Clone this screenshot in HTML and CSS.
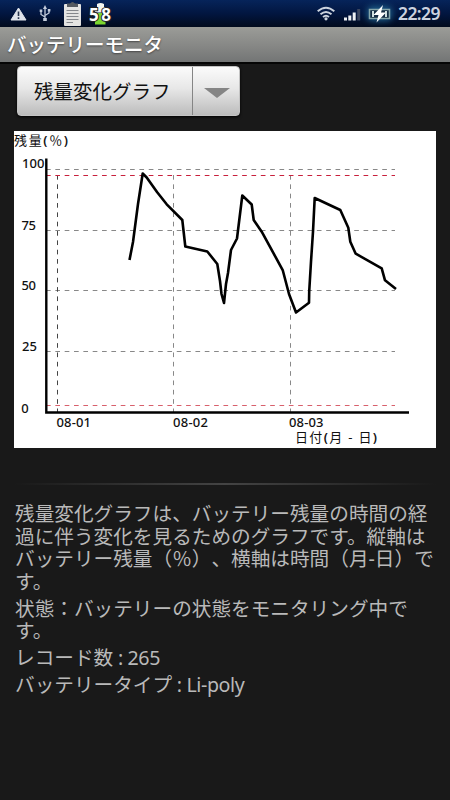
FILE: index.html
```
<!DOCTYPE html>
<html lang="ja">
<head>
	<meta charset="utf-8">
	<meta name="viewport" content="width=device-width, initial-scale=1.0">
	<title>バッテリーモニタ</title>
	<link rel="stylesheet" href="styles.css">
</head>
<body>

	<div id="status-bar">
		<svg class="status-icons" width="120" height="27" viewBox="0 0 120 27">
			<path d="M18.5 8 L26 20 H11 Z" fill="#dfe3ea" stroke="#dfe3ea" stroke-linejoin="round"/>
			<path d="M18.5 11.5 V16 M18.5 17.3 V19" stroke="#27344d" stroke-width="1.6"/>
			<g fill="none" stroke="#c3ccdb" stroke-width="1.3">
				<path d="M45 8 V20 M45 17 L41 14.5 V11 M45 15.5 L49 13 V10"/>
			</g>
			<path d="M45 5 L47 9 H43 Z M43.2 18 h3.6 v3 h-3.6 Z M39.7 9.5 h2.6 v2.6 h-2.6 Z M47.8 9 h2.6 v2.6 h-2.6 Z" fill="#c3ccdb"/>
			<rect x="64" y="4" width="17" height="22" rx="1" fill="#e4e4e2"/>
			<path d="M67 7 V3.5 H70 Q72.5 .5 75 3.5 H78 V7 Z" fill="#555a60"/>
			<path d="M66.5 10.5 H78.5 M66.5 13.5 H78.5 M66.5 16.5 H78.5 M66.5 19.5 H78.5 M66.5 22.5 H73" stroke="#85888c"/>
			<path d="M97 4 Q100.500 2 104 4 V7 H105.500 V12.500 H95 V7 H97 Z" fill="#f3f5ef"/>
			<path d="M97.500 13 h5 v5 l3 3.500 v3 h-10.500 v-3 l2.500 -3.500 Z" fill="#7bd62f"/>
			<text class="level" x="89" y="20.500" textLength="22">58</text>
		</svg>
		<svg class="status-icons" width="132" height="27" viewBox="318 0 132 27">
			<g fill="none" stroke="#ccd3dd" stroke-width="1.9">
				<path d="M317.700 11.300 Q326 4 334.300 11.300"/>
				<path d="M320.500 14.300 Q326 9.500 331.500 14.300"/>
				<path d="M323 17 Q326 14.500 329 17"/>
			</g>
			<circle cx="326" cy="18.800" r="1.600" fill="#ccd3dd"/>
			<path d="M344 17.500 h3 v3 h-3 Z M348.300 15.500 h3 v5 h-3 Z M352.700 12.500 h3 v8 h-3 Z" fill="#eceff3"/>
			<path d="M357.200 9 h3 v11.500 h-3 Z" fill="#3a4660"/>
			<rect class="charge-glow" x="367" y="6" width="25" height="15" rx="5"/>
			<rect x="369.500" y="9.500" width="20" height="9" fill="#152c43" stroke="#87a7ab" stroke-width="1.500"/>
			<path d="M373 11 v6 M386 11 v6" stroke="#cfdfdf" stroke-width="2"/>
			<path d="M383 5 L373.500 15 H378.500 L376.500 22.500 L386 12.500 H381 Z" fill="#fff"/>
			<text class="clock" x="398" y="19.500" textLength="42.500">22:29</text>
		</svg>
	</div>

	<div id="title-bar">バッテリーモニタ</div>

	<div id="content">
		<div class="spinner">
			<span class="spinner-label">残量変化グラフ</span>
			<span class="spinner-arrow"></span>
		</div>

		<svg class="chart" width="422" height="317" viewBox="14 131 422 317">
			<!-- grid -->
			<g class="grid">
				<path d="M46 169.500 H395 M46 230.500 H395 M46 290.500 H395 M46 351.500 H395"/>
				<path d="M173.500 175 V412 M290.500 175 V412"/>
				<path class="first-day" d="M57.500 175 V412"/>
				<path class="limit" d="M46 175.500 H395"/>
				<path class="limit low" d="M46 405.500 H395"/>
			</g>
			<!-- axes -->
			<path class="axis" d="M46.300 158.500 V412.500 H409"/>
			<!-- battery level -->
			<polyline class="line" points="129.500,260 133,242 138,204 142.700,173.500 146.700,177.500 157,192 166.700,204.300 182.300,220 185.300,246.500 207.300,251.500 217.300,264 220,281 221.500,294 224,303 226,284 228,273 231,250 237,238.500 242.300,195.500 251.700,204.500 253.700,220 261.700,231.700 282.700,270 289,294 296,312.500 309,302.700 309.200,291.700 311,261.700 313,231.700 314.700,198 340.300,210 348.300,227.700 350.300,241.700 355.700,253.700 381.700,268.300 385,280.300 396,289"/>
			<g class="labels">
				<text class="unit" x="14" y="145" textLength="54">残量<tspan class="paren">(</tspan>％<tspan class="paren">)</tspan></text>
				<text x="22" y="168" textLength="22.500">100</text>
				<text x="21.500" y="229.500" textLength="14.500">75</text>
				<text x="21.500" y="290" textLength="14.500">50</text>
				<text x="22" y="351" textLength="15">25</text>
				<text x="21.300" y="413">0</text>
				<text x="56.500" y="427" textLength="34.500">08-01</text>
				<text x="173" y="427" textLength="35">08-02</text>
				<text x="289" y="427" textLength="34.500">08-03</text>
				<text class="unit" x="295" y="441.500" textLength="82">日付<tspan class="paren">(</tspan>月 - 日<tspan class="paren">)</tspan></text>
			</g>
		</svg>

		<div class="divider"></div>

		<div class="info">
			<p>残量変化グラフは、バッテリー残量の時間の経<br>過に伴う変化を見るためのグラフです。縦軸は<br>バッテリー残量（％）、横軸は時間（月-日）で<br>す。</p>
			<p>状態：バッテリーの状態をモニタリング中で<br>す。</p>
			<p>レコード数<span class="value"> : 265</span></p>
			<p>バッテリータイプ<span class="value"> : Li-poly</span></p>
		</div>
	</div>

</body>
</html>
```

FILE: styles.css
```
html,body{
	height: 100%;
	margin: 0;
	padding: 0;
}

body{
	background-color: #191919;
	font-family: "Noto Sans", "Noto Sans CJK JP", sans-serif;
	text-spacing-trim: space-all;
	overflow: hidden;
}

#status-bar{
	display: flex;
	justify-content: space-between;
	height: 27px;
	background: linear-gradient(#06245a, #021640 50%, #010a1d);
}

.status-icons{
	display: block;
	overflow: visible;
}

.level{
	font-size: 17px;
	font-weight: bold;
	fill: #fff;
	stroke: #222;
	stroke-width: 2px;
	paint-order: stroke;
}

.charge-glow{
	fill: #1c5b86;
	filter: blur(3px);
}

.clock{
	font-size: 17.5px;
	font-weight: 600;
	fill: #ccd2df;
}

#title-bar{
	box-sizing: border-box;
	height: 37px;
	padding-left: 7px;
	border-bottom: 2px solid #050505;
	background: linear-gradient(#9b9c98, #868785 55%, #737575);
	color: #fff;
	font-size: 19.5px;
	font-weight: 500;
	line-height: 35px;
	text-shadow: 0 1px 2px #444;
}

#content{
	padding: 2px 14px 0;
}

.spinner{
	display: flex;
	box-sizing: border-box;
	width: 223px;
	height: 50px;
	margin-left: 3px;
	border: 1px solid #c4c4c4;
	border-radius: 4px;
	background: linear-gradient(#fbfbfb, #e7e7e7 45%, #bcbcbc);
	box-shadow: 0 1px 3px #000;
	color: #111;
}

.spinner-label{
	width: 175px;
	padding-left: 16px;
	box-sizing: border-box;
	border-right: 1px solid #858585;
	font-size: 19.5px;
	line-height: 49px;
	white-space: nowrap;
}

.spinner-arrow{
	align-self: center;
	margin: 4px 0 0 11px;
	border: 13px solid transparent;
	border-top: 10px solid #858585;
	border-bottom: 0;
}

.chart{
	display: block;
	margin-top: 15px;
	background-color: #fff;
}

.grid{
	fill: none;
	stroke: #888;
	stroke-width: 1;
	stroke-dasharray: 4.67 4.67;
}

.grid .first-day{
	stroke: #444;
}

.grid .limit{
	stroke: #c8203c;
}

.grid .low{
	stroke: #d8606c;
}

.axis{
	fill: none;
	stroke: #000;
	stroke-width: 2.4;
}

.line{
	fill: none;
	stroke: #000;
	stroke-width: 2.6;
	stroke-linejoin: round;
}

.labels{
	fill: #111;
	font-size: 13px;
	font-weight: 500;
}

.labels .unit{
	font-weight: 400;
}

.labels .paren{
	font-weight: 600;
}

.divider{
	height: 2px;
	margin-top: 35px;
	background: linear-gradient(90deg, #191919, #444 50%, #191919);
}

.info{
	padding: 18px 0 0 1px;
	color: #b9b9b9;
	font-size: 19.65px;
	line-height: 22.6px;
	white-space: nowrap;
}

.info p{
	margin: 0 0 4.3px;
}

.value{
	letter-spacing: -0.4px;
}
```
